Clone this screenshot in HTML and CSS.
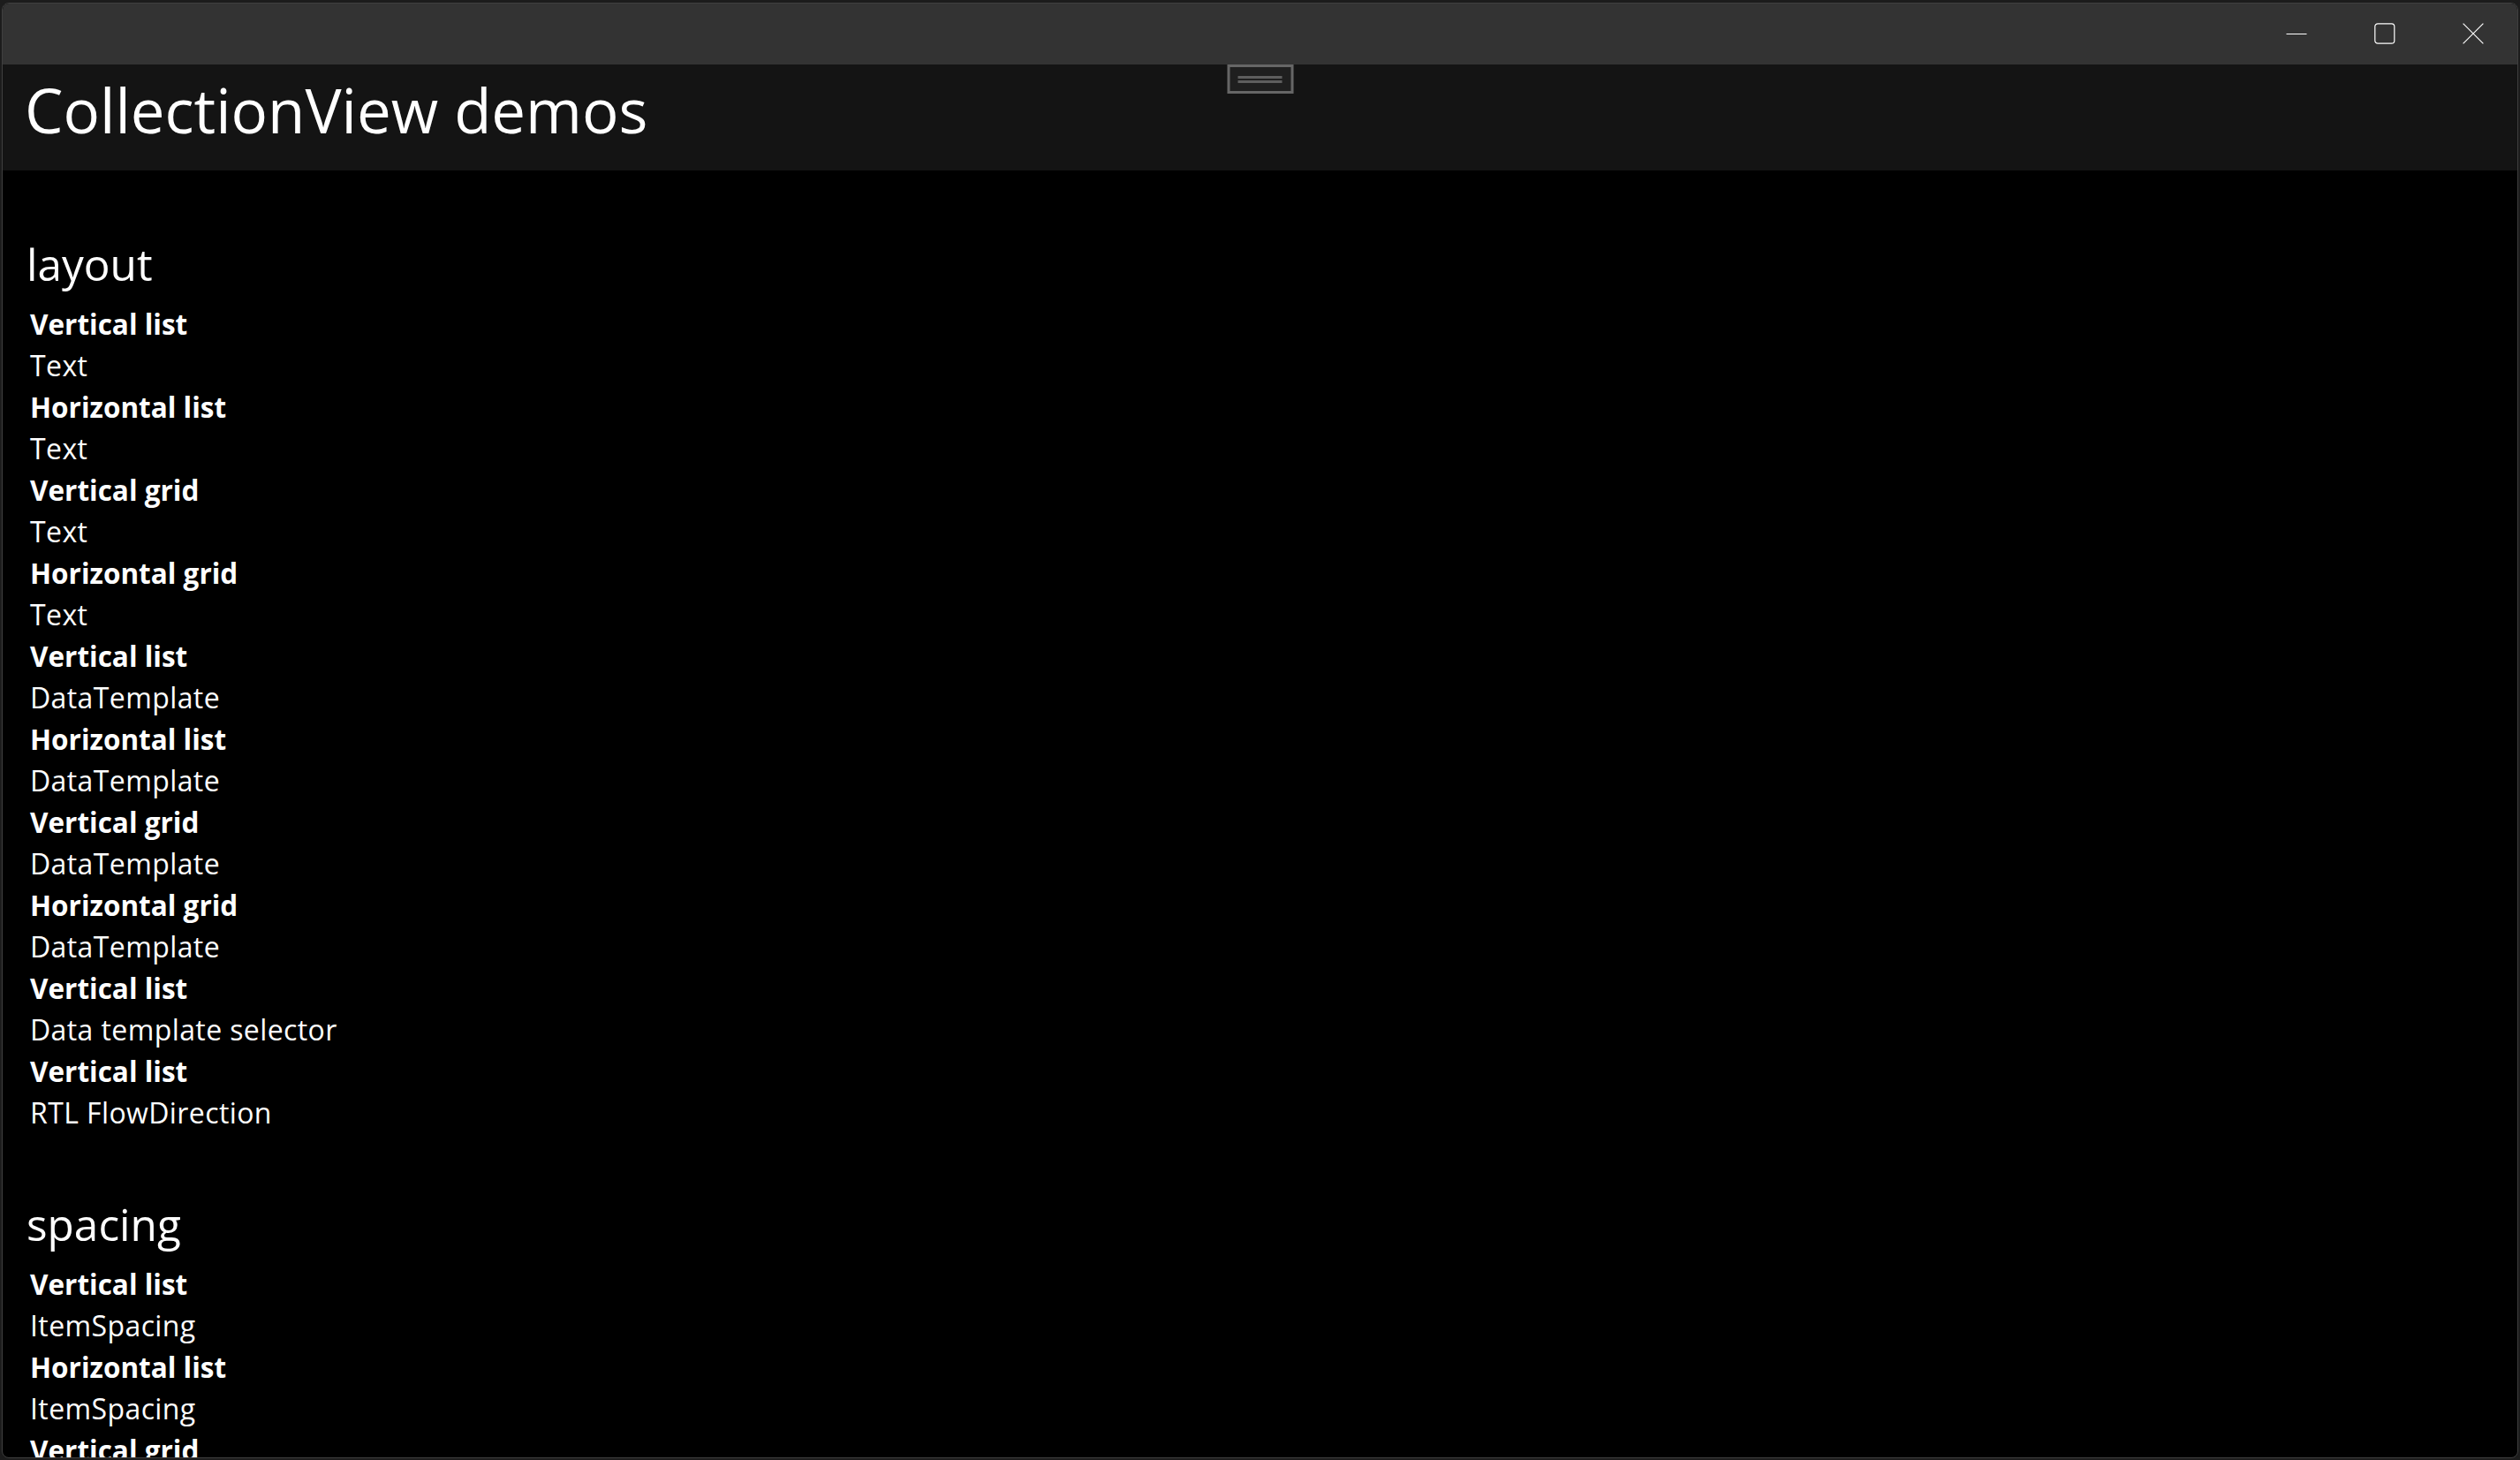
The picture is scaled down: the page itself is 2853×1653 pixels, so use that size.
FILE: index.html
```html
<!DOCTYPE html>
<html lang="en">
<head>
<meta charset="utf-8">
<title>CollectionView demos</title>
<link rel="stylesheet" href="styles.css">
</head>
<body>
<div class="window">
  <div class="titlebar">
    <div class="caption">
      <div class="cap-btn">
        <svg width="24" height="24" viewBox="0 0 24 24"><line x1="0.5" y1="12.5" x2="23.5" y2="12.5" stroke="#fff" stroke-width="1.2"/></svg>
      </div>
      <div class="cap-btn">
        <svg width="24" height="24" viewBox="0 0 24 24"><rect x="0.8" y="0.8" width="22" height="22.4" rx="3.2" fill="none" stroke="#fff" stroke-width="1.2"/></svg>
      </div>
      <div class="cap-btn">
        <svg width="24" height="24" viewBox="0 0 24 24"><path d="M0.6 0.6 L23.4 23.4 M23.4 0.6 L0.6 23.4" fill="none" stroke="#fff" stroke-width="1.2"/></svg>
      </div>
    </div>
  </div>
  <div class="header">
    <h1 class="title">CollectionView demos</h1>
    <div class="handle"><span class="handle-line"></span><span class="handle-line"></span></div>
  </div>
  <div class="content">
    <section class="group">
      <h2 class="group-title">layout</h2>
      <ul class="items">
        <li class="item"><span class="item-name">Vertical list</span><span class="item-desc">Text</span></li>
        <li class="item"><span class="item-name">Horizontal list</span><span class="item-desc">Text</span></li>
        <li class="item"><span class="item-name">Vertical grid</span><span class="item-desc">Text</span></li>
        <li class="item"><span class="item-name">Horizontal grid</span><span class="item-desc">Text</span></li>
        <li class="item"><span class="item-name">Vertical list</span><span class="item-desc">DataTemplate</span></li>
        <li class="item"><span class="item-name">Horizontal list</span><span class="item-desc">DataTemplate</span></li>
        <li class="item"><span class="item-name">Vertical grid</span><span class="item-desc">DataTemplate</span></li>
        <li class="item"><span class="item-name">Horizontal grid</span><span class="item-desc">DataTemplate</span></li>
        <li class="item"><span class="item-name">Vertical list</span><span class="item-desc">Data template selector</span></li>
        <li class="item"><span class="item-name">Vertical list</span><span class="item-desc">RTL FlowDirection</span></li>
      </ul>
    </section>
    <section class="group">
      <h2 class="group-title">spacing</h2>
      <ul class="items">
        <li class="item"><span class="item-name">Vertical list</span><span class="item-desc">ItemSpacing</span></li>
        <li class="item"><span class="item-name">Horizontal list</span><span class="item-desc">ItemSpacing</span></li>
        <li class="item"><span class="item-name">Vertical grid</span><span class="item-desc">ItemSpacing</span></li>
        <li class="item"><span class="item-name">Horizontal grid</span><span class="item-desc">ItemSpacing</span></li>
      </ul>
    </section>
  </div>
</div>
</body>
</html>
```
FILE: styles.css
```css
html, body {
  margin: 0;
  padding: 0;
  height: 100%;
}

body {
  background: #1c1c1c;
  font-family: "Open Sans", "Noto Sans", "DejaVu Sans", sans-serif;
  color: #ffffff;
  overflow: hidden;
}

.window {
  box-sizing: border-box;
  margin: 3px 2px 2px 2px;
  height: calc(100% - 5px);
  border: 1px solid #3f3f3f;
  border-radius: 8px;
  overflow: hidden;
  display: flex;
  flex-direction: column;
  background: #000000;
}

.titlebar {
  flex: 0 0 69px;
  background: #333333;
  display: flex;
  justify-content: flex-end;
}

.caption {
  display: flex;
}

.cap-btn {
  width: 100px;
  height: 67px;
  display: flex;
  align-items: center;
  justify-content: center;
}

.cap-btn svg {
  display: block;
}

.header {
  position: relative;
  flex: 0 0 120px;
  box-sizing: border-box;
  background: #141414;
  padding: 4px 0 0 25px;
}

.title {
  margin: 0;
  font-size: 69px;
  font-weight: 400;
  line-height: 94px;
  white-space: nowrap;
}

.handle {
  position: absolute;
  top: 0;
  left: 50%;
  transform: translateX(-50%);
  box-sizing: border-box;
  width: 75px;
  height: 33px;
  border: 3px solid #666666;
  background: #1f1f1f;
  display: flex;
  flex-direction: column;
  align-items: center;
  justify-content: center;
  gap: 2px;
}

.handle-line {
  display: block;
  width: 50px;
  height: 3px;
  background: #5e5e5e;
}

.content {
  flex: 1 1 auto;
  overflow: hidden;
  padding: 3px 0 0 0;
}

.group {
  padding: 70px 0 0 0;
}

.group-title {
  margin: 0 0 10px 27px;
  font-size: 49.5px;
  font-weight: 400;
  line-height: 66px;
}

.items {
  list-style: none;
  margin: 0;
  padding: 1px 0 0 31px;
}

.item {
  display: flex;
  flex-direction: column;
}

.item-name,
.item-desc {
  line-height: 47px;
  white-space: nowrap;
}

.item-name {
  font-size: 31.5px;
  font-weight: 700;
}

.item-desc {
  font-size: 32px;
  font-weight: 400;
  letter-spacing: 0.4px;
}
```
